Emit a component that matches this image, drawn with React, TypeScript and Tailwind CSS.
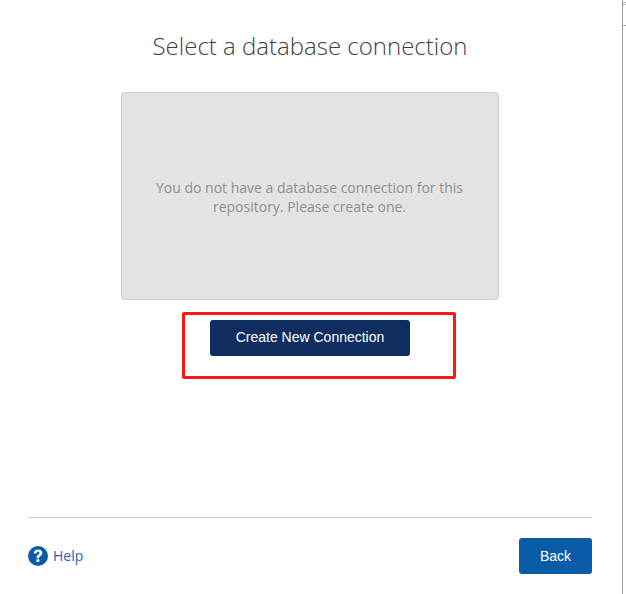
export default function App() {
  return (
    <div className="relative flex h-[594px] w-[626px] overflow-hidden bg-white font-['Open_Sans',sans-serif]">
      <div className="mr-[2px] flex h-full w-[620px] flex-col items-center">
        <h1 className="mt-[30px] h-[32px] text-center text-[24px] leading-[32px] font-light text-[#3f3f3f]">
          Select a database connection
        </h1>

        <div className="mt-[30px] flex h-[208px] w-[378px] items-center justify-center rounded-[4px] border border-[#cccccc] bg-[#e3e3e3] pt-[2px] pr-[25px] pl-[24px]">
          <p className="text-center text-[14px] leading-[19px] text-[#8f8f8f]">
            You do not have a database connection for this repository. Please create one.
          </p>
        </div>

        <div className="relative mt-[20px]">
          <button className="h-[36px] w-[200px] rounded-[3px] bg-[#0f2d5e] pb-[2px] font-['Liberation_Sans',sans-serif] text-[14px] text-white">
            Create New Connection
          </button>
          <div className="absolute top-[-8px] left-[-28px] h-[67px] w-[274px] rounded-[2px] border-[3px] border-[#fb1a10]" />
        </div>

        <div className="mt-[161px] w-[564px] border-t border-[#cccccc]" />

        <div className="mt-[20px] flex w-[564px] items-center justify-between">
          <a className="flex items-center gap-[5px] pb-[1px] text-[14px] text-[#1f63b5]">
            <svg width="20" height="20" viewBox="0 0 20 20" className="mt-[1px] shrink-0">
              <circle cx="10" cy="10" r="10" fill="#0b5ca8" />
              <path
                d="M5.800 7.400c.1-2.400 1.800-3.900 4.300-3.900 2.500 0 4.200 1.400 4.200 3.500 0 1.500-.8 2.400-2 3.200-.9.600-1.100.9-1.100 1.700v.3H8.600v-.6c0-1.400.5-2.100 1.500-2.800.9-.6 1.300-1 1.300-1.700 0-.8-.6-1.300-1.400-1.300-.9 0-1.500.6-1.600 1.600H5.800z"
                fill="#ffffff"
              />
              <rect x="8.500" y="13.200" width="2.800" height="2.900" rx="0.300" fill="#ffffff" />
            </svg>
            Help
          </a>
          <button className="h-[36px] w-[73px] rounded-[3px] bg-[#0b5ca8] font-['Liberation_Sans',sans-serif] text-[14px] text-white">
            Back
          </button>
        </div>
      </div>

      <div className="h-full w-px bg-[#a0a0a0]" />
      <div className="flex flex-1 flex-col">
        <div className="mt-[2px] h-px bg-[#b5b5b5]" />
        <div className="mt-[1px] h-px bg-[#b5b5b5]" />
        <div className="mt-[20px] h-px bg-[#a0a0a0]" />
      </div>
    </div>
  );
}
